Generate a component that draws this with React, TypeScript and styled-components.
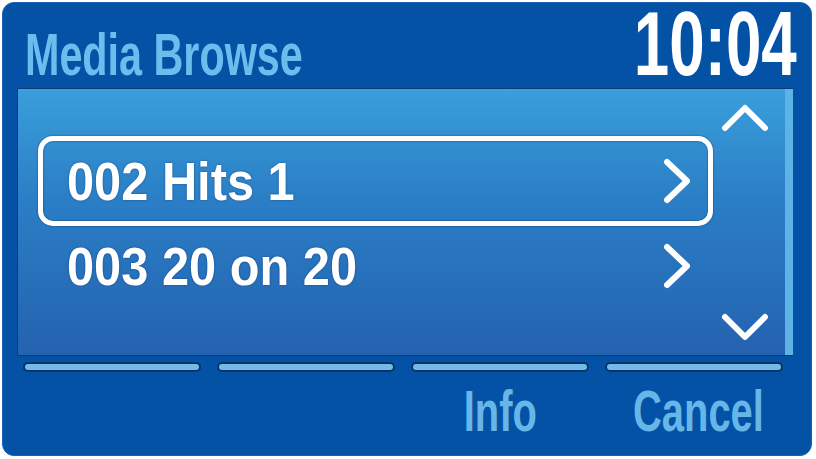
import React from "react";
import styled, { createGlobalStyle } from "styled-components";

const GlobalStyle = createGlobalStyle`
  html, body { margin: 0; padding: 0; background: #ffffff; }
  body { font-family: "Liberation Sans", Arial, sans-serif; }
`;

type Item = { id: string; label: string; selected?: boolean };

const items: Item[] = [
  { id: "002", label: "002 Hits 1", selected: true },
  { id: "003", label: "003 20 on 20" },
];

const softkeys = ["", "", "Info", "Cancel"];

function RightChevron() {
  return (
    <svg width="30" height="48" viewBox="0 0 30 48">
      <polyline
        points="5,5 25,24 5,43"
        fill="none"
        stroke="#ffffff"
        strokeWidth="6"
        strokeLinecap="round"
        strokeLinejoin="round"
      />
    </svg>
  );
}

function ScrollArrow({ down }: { down?: boolean }) {
  return (
    <svg width="48" height="30" viewBox="0 0 48 30">
      <polyline
        points={down ? "4,5 24,25 44,5" : "4,25 24,5 44,25"}
        fill="none"
        stroke="#ffffff"
        strokeWidth="6"
        strokeLinecap="round"
        strokeLinejoin="round"
      />
    </svg>
  );
}

function App() {
  return (
    <>
      <GlobalStyle />
      <Frame>
        <Header>
          <Title>
            <Squeeze $scale={0.7} $origin="left">Media Browse</Squeeze>
          </Title>
          <Clock>
            <Squeeze $scale={0.7} $origin="right">10:04</Squeeze>
          </Clock>
        </Header>
        <Panel>
          <List>
            {items.map((item) => (
              <Row key={item.id} $selected={item.selected}>
                <RowText>
                  <Squeeze $scale={0.92} $origin="left">{item.label}</Squeeze>
                </RowText>
                <RightChevron />
              </Row>
            ))}
          </List>
          <ScrollColumn>
            <ScrollArrow />
            <ScrollArrow down />
          </ScrollColumn>
          <Track />
        </Panel>
        <SoftkeyBar>
          {softkeys.map((k, i) => (
            <Softkey key={i}>
              <KeyLine />
              <KeyLabel>
                <Squeeze $scale={0.7} $origin="center">{k}</Squeeze>
              </KeyLabel>
            </Softkey>
          ))}
        </SoftkeyBar>
      </Frame>
    </>
  );
}

const Frame = styled.div`
  box-sizing: border-box;
  margin: 2px;
  width: 810px;
  height: 454px;
  border-radius: 12px;
  background: #0452a6;
  border: 1px solid #1b62b4;
  display: flex;
  flex-direction: column;
`;

const Header = styled.div`
  height: 85px;
  display: flex;
  justify-content: space-between;
  align-items: baseline;
  padding: 2px 14px 0 22px;
  box-sizing: border-box;
`;

const Squeeze = styled.span<{ $scale: number; $origin: string }>`
  display: inline-block;
  white-space: nowrap;
  transform: scaleX(${(p) => p.$scale});
  transform-origin: ${(p) => p.$origin} center;
`;

const Title = styled.div`
  font-size: 59px;
  font-weight: bold;
  line-height: 1;
  color: #6cbdee;
`;

const Clock = styled.div`
  font-size: 91px;
  font-weight: bold;
  line-height: 0.85;
  color: #ffffff;
  text-align: right;
`;

const Panel = styled.div`
  margin: 0 18px 0 14px;
  height: 268px;
  box-sizing: border-box;
  border: 1px solid #0b3b78;
  border-right: none;
  background: linear-gradient(180deg, #3a9fdb 0%, #2b7fc6 40%, #2462b0 100%);
  display: flex;
`;

const List = styled.div`
  flex: 1;
  padding: 47px 0 0 20px;
  display: flex;
  flex-direction: column;
`;

const Row = styled.div<{ $selected?: boolean }>`
  box-sizing: border-box;
  height: 90px;
  display: flex;
  align-items: center;
  justify-content: space-between;
  padding: 0 16px 0 24px;
  border: 5px solid ${(p) => (p.$selected ? "#ffffff" : "transparent")};
  border-radius: 15px;
  box-shadow: ${(p) =>
    p.$selected ? "0 0 2px rgba(0, 20, 70, 0.6), inset 0 0 2px rgba(0, 20, 70, 0.6)" : "none"};

  & + & {
    margin-top: -5px;
  }
`;

const RowText = styled.div`
  font-size: 53px;
  font-weight: bold;
  line-height: 1;
  color: #ffffff;
  text-shadow: 0 0 2px rgba(0, 30, 80, 0.6);
`;

const ScrollColumn = styled.div`
  width: 72px;
  box-sizing: border-box;
  padding: 14px 8px 13px 0;
  display: flex;
  flex-direction: column;
  justify-content: space-between;
  align-items: center;
`;

const Track = styled.div`
  width: 8px;
  background: #5db3e8;
`;

const SoftkeyBar = styled.div`
  display: grid;
  grid-template-columns: repeat(4, 178px);
  column-gap: 16px;
  padding: 6px 0 0 20px;
`;

const Softkey = styled.div`
  display: flex;
  flex-direction: column;
`;

const KeyLine = styled.div`
  height: 10px;
  box-sizing: border-box;
  border: 2px solid #0a3464;
  border-radius: 5px;
  background: #72baea;
`;

const KeyLabel = styled.div`
  margin-top: 9px;
  height: 60px;
  font-size: 57px;
  font-weight: bold;
  line-height: 60px;
  color: #66b6e8;
  text-align: center;
`;

export default App;
